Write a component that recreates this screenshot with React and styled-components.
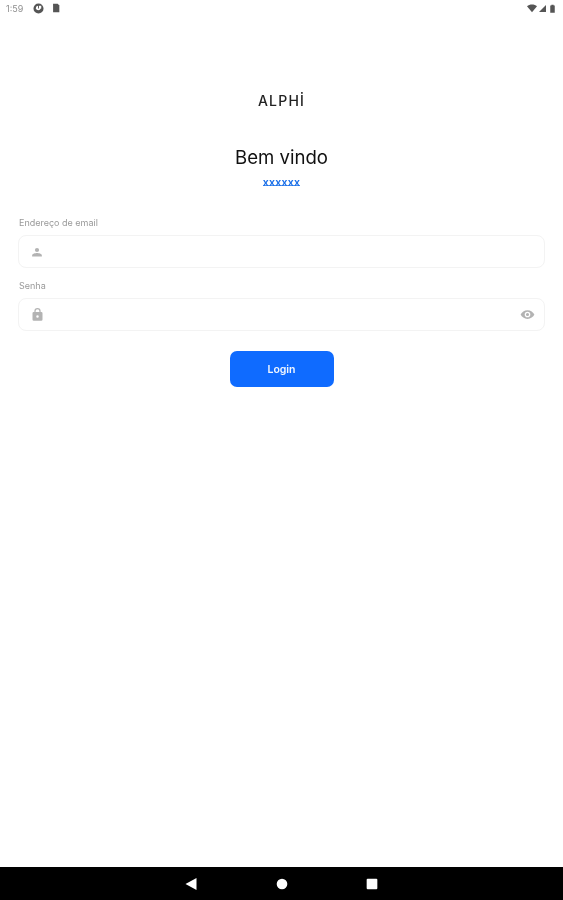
import React from "react";
import styled, { createGlobalStyle } from "styled-components";

const Global = createGlobalStyle`
  html, body { margin: 0; padding: 0; background: #fff; }
  * { box-sizing: border-box; }
`;

const Screen = styled.div`
  width: 563px;
  height: 900px;
  display: flex;
  flex-direction: column;
  background: #fff;
  font-family: Inter, "Liberation Sans", sans-serif;
  filter: blur(0.55px);
`;

const StatusBar = styled.div`
  height: 16px;
  padding: 0 6px;
  display: flex;
  align-items: center;
  justify-content: space-between;
  color: #555;
`;

const StatusGroup = styled.div`
  display: flex;
  align-items: center;
  gap: ${(p) => p.$gap}px;
`;

const Time = styled.span`
  font-size: 9px;
  color: #8f8f8f;
  width: 20px;
`;

const Content = styled.main`
  flex: 1;
  display: flex;
  flex-direction: column;
  align-items: center;
  padding: 76px 18px 0;
`;

const Logo = styled.div`
  font-size: 14px;
  line-height: 17px;
  font-weight: 500;
  letter-spacing: 1.2px;
  color: #222;
`;

const Title = styled.h1`
  margin: 36px 0 0;
  font-size: 18.6px;
  line-height: 24px;
  font-weight: 400;
  color: #111;
`;

const Subtitle = styled.div`
  margin-top: 8px;
  height: 9px;
  font-size: 10.5px;
  line-height: 11px;
  font-weight: 600;
  letter-spacing: 0.3px;
  color: #1a6fe8;
  border-bottom: 1px solid #4f92ee;
`;

const Form = styled.form`
  width: 100%;
  margin-top: 33px;
  display: flex;
  flex-direction: column;
  gap: 14px;
`;

const Field = styled.div`
  display: flex;
  flex-direction: column;
  gap: 9px;
`;

const Label = styled.label`
  margin-left: 1px;
  font-size: 9px;
  line-height: 7px;
  color: #999;
`;

const InputBox = styled.div`
  height: 33px;
  border: 1px solid #f3f3f3;
  border-radius: 8px;
  padding: 0 8px 0 9px;
  display: flex;
  align-items: center;
  justify-content: space-between;
  color: #b3b3b3;
`;

const IconSlot = styled.span`
  width: 18px;
  height: 18px;
  display: flex;
  align-items: center;
  justify-content: center;
`;

const Button = styled.button`
  margin-top: 20px;
  width: 104px;
  height: 36px;
  border: 0;
  border-radius: 7px;
  background: #0f6bff;
  color: #f2f7ff;
  font-family: inherit;
  font-size: 10.5px;
  font-weight: 600;
`;

const NavBar = styled.nav`
  height: 33px;
  background: #000;
  display: flex;
  align-items: center;
  justify-content: center;
  gap: 74px;
  color: #fff;
`;

const Icon = ({ size = 12, children }) => (
  <svg width={size} height={size} viewBox="0 0 24 24" fill="currentColor">{children}</svg>
);

export default function App() {
  return (
    <>
      <Global />
      <Screen>
        <StatusBar>
          <StatusGroup $gap={7}>
            <Time>1:59</Time>
            <Icon size={11}>
              <path d="M12 1a11 11 0 1 0 0 22 11 11 0 0 0 0-22zm1 5h5v6h-5zM6 12a6 6 0 0 1 5-5.9V12h6a6 6 0 0 1-11 0z" fillRule="evenodd" />
            </Icon>
            <Icon size={10}>
              <path d="M5 2h11l4 4v16H5z" />
            </Icon>
          </StatusGroup>
          <StatusGroup $gap={2}>
            <Icon size={10}>
              <path d="M0 8c6-6 18-6 24 0L12 22z" />
            </Icon>
            <Icon size={7}>
              <path d="M24 0v24H0z" />
            </Icon>
            <Icon size={9}>
              <path d="M9 2h6v2h3v19H6V4h3z" />
            </Icon>
          </StatusGroup>
        </StatusBar>
        <Content>
          <Logo>ALPHİ</Logo>
          <Title>Bem vindo</Title>
          <Subtitle>xxxxxx</Subtitle>
          <Form>
            <Field>
              <Label>Endereço de email</Label>
              <InputBox>
                <IconSlot>
                  <Icon size={18}>
                    <path d="M12 6.500a2.800 2.800 0 1 1 0 5.600 2.800 2.800 0 0 1 0-5.600zM5.500 18v-1.500c0-2.200 4.300-3.200 6.500-3.200s6.500 1 6.500 3.200V18z" />
                  </Icon>
                </IconSlot>
              </InputBox>
            </Field>
            <Field>
              <Label>Senha</Label>
              <InputBox>
                <IconSlot>
                  <Icon size={15}>
                    <path fillRule="evenodd" d="M18 8h-1V6.500a5 5 0 0 0-10 0V8H6a2 2 0 0 0-2 2v10a2 2 0 0 0 2 2h12a2 2 0 0 0 2-2V10a2 2 0 0 0-2-2zM9 6.500a3 3 0 0 1 6 0V8H9zM12 17a2 2 0 1 1 0-4 2 2 0 0 1 0 4z" />
                  </Icon>
                </IconSlot>
                <IconSlot>
                  <Icon size={15}>
                    <path fillRule="evenodd" d="M12 5C7 5 2.700 8.100 1 12c1.700 3.900 6 7 11 7s9.300-3.100 11-7c-1.700-3.900-6-7-11-7zm0 11.500a4.500 4.500 0 1 1 0-9 4.500 4.500 0 0 1 0 9zm0-7a2.500 2.500 0 1 0 0 5 2.500 2.500 0 0 0 0-5z" />
                  </Icon>
                </IconSlot>
              </InputBox>
            </Field>
          </Form>
          <Button type="button">Login</Button>
        </Content>
        <NavBar>
          <Icon size={16}><path d="M18.750 3v18L2.250 12z" /></Icon>
          <Icon size={16}><circle cx="12" cy="12" r="8" /></Icon>
          <Icon size={16}><rect x="4" y="4" width="16" height="16" rx="1.500" /></Icon>
        </NavBar>
      </Screen>
    </>
  );
}
